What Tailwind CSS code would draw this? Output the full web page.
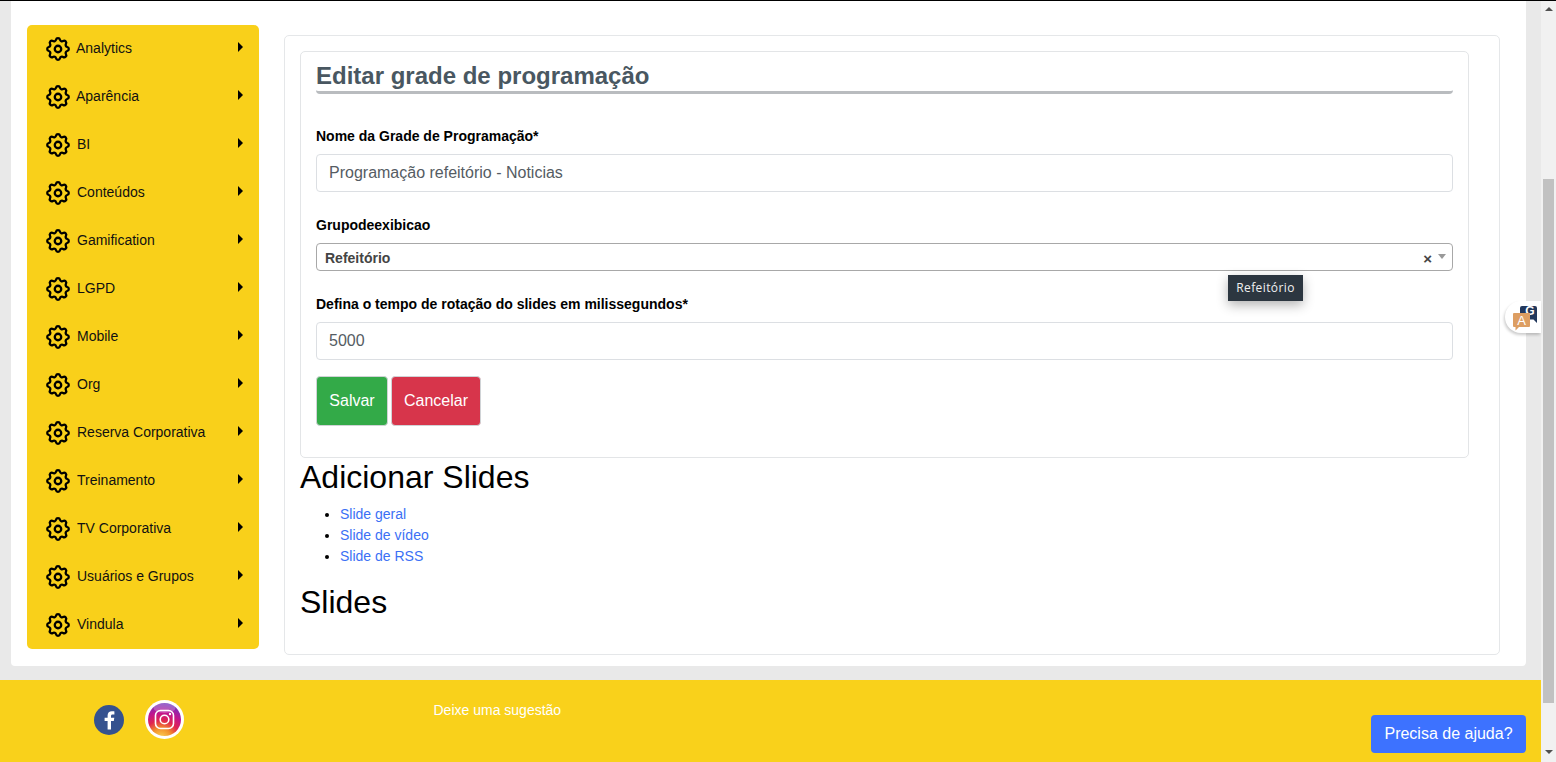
<!DOCTYPE html>
<html lang="pt-BR">
<head>
<meta charset="utf-8">
<title>Editar grade de programação</title>
<script src="https://cdn.jsdelivr.net/npm/@tailwindcss/browser@4"></script>
</head>
<body class="overflow-hidden font-['Liberation_Sans',sans-serif]">
<svg class="hidden">
  <symbol id="cog" viewBox="2 2 20 20" fill="none" stroke="currentColor" stroke-width="1.9" stroke-linecap="round" stroke-linejoin="round">
    <path d="M10.325 4.317c.426-1.756 2.924-1.756 3.35 0a1.724 1.724 0 002.573 1.066c1.543-.94 3.31.826 2.37 2.37a1.724 1.724 0 001.065 2.572c1.756.426 1.756 2.924 0 3.35a1.724 1.724 0 00-1.066 2.573c.94 1.543-.826 3.31-2.37 2.37a1.724 1.724 0 00-2.572 1.065c-.426 1.756-2.924 1.756-3.35 0a1.724 1.724 0 00-2.573-1.066c-1.543.94-3.31-.826-2.37-2.37a1.724 1.724 0 00-1.065-2.572c-1.756-.426-1.756-2.924 0-3.35a1.724 1.724 0 001.066-2.573c-.94-1.543.826-3.31 2.37-2.37.996.608 2.296.07 2.572-1.065z"/>
    <circle cx="12" cy="12" r="2.700"/>
  </symbol>
  <symbol id="caret" viewBox="0 0 5 10"><path d="M0 0l5 5-5 5z" fill="currentColor"/></symbol>
</svg>

<div class="relative h-[762px] w-[1556px] overflow-hidden border-t border-black flex">
  <!-- conteudo -->
  <div class="w-[1541px] bg-[#e9e9e9] flex flex-col">
    <div class="ml-[11px] w-[1515px] h-[665px] bg-white rounded-b-[4px] flex pl-[16px] pt-[24px]">

      <!-- menu lateral -->
      <nav class="w-[232px] h-[624px] bg-[#f9d01a] rounded-[5px] text-[14px] text-[#111]">
        <a class="h-[48px] flex items-center pb-[2px] pl-[19px] pr-[16px]"><svg class="w-[24px] h-[24px] mt-[2px] text-black"><use href="#cog"/></svg><span class="ml-[6px]">Analytics</span><svg class="ml-auto w-[5px] h-[10px] mb-[2px] text-black"><use href="#caret"/></svg></a>
        <a class="h-[48px] flex items-center pb-[2px] pl-[19px] pr-[16px]"><svg class="w-[24px] h-[24px] mt-[2px] text-black"><use href="#cog"/></svg><span class="ml-[6px]">Aparência</span><svg class="ml-auto w-[5px] h-[10px] mb-[2px] text-black"><use href="#caret"/></svg></a>
        <a class="h-[48px] flex items-center pb-[2px] pl-[19px] pr-[16px]"><svg class="w-[24px] h-[24px] mt-[2px] text-black"><use href="#cog"/></svg><span class="ml-[7px]">BI</span><svg class="ml-auto w-[5px] h-[10px] mb-[2px] text-black"><use href="#caret"/></svg></a>
        <a class="h-[48px] flex items-center pb-[2px] pl-[19px] pr-[16px]"><svg class="w-[24px] h-[24px] mt-[2px] text-black"><use href="#cog"/></svg><span class="ml-[7px]">Conteúdos</span><svg class="ml-auto w-[5px] h-[10px] mb-[2px] text-black"><use href="#caret"/></svg></a>
        <a class="h-[48px] flex items-center pb-[2px] pl-[19px] pr-[16px]"><svg class="w-[24px] h-[24px] mt-[2px] text-black"><use href="#cog"/></svg><span class="ml-[7px]">Gamification</span><svg class="ml-auto w-[5px] h-[10px] mb-[2px] text-black"><use href="#caret"/></svg></a>
        <a class="h-[48px] flex items-center pb-[2px] pl-[19px] pr-[16px]"><svg class="w-[24px] h-[24px] mt-[2px] text-black"><use href="#cog"/></svg><span class="ml-[7px]">LGPD</span><svg class="ml-auto w-[5px] h-[10px] mb-[2px] text-black"><use href="#caret"/></svg></a>
        <a class="h-[48px] flex items-center pb-[2px] pl-[19px] pr-[16px]"><svg class="w-[24px] h-[24px] mt-[2px] text-black"><use href="#cog"/></svg><span class="ml-[7px]">Mobile</span><svg class="ml-auto w-[5px] h-[10px] mb-[2px] text-black"><use href="#caret"/></svg></a>
        <a class="h-[48px] flex items-center pb-[2px] pl-[19px] pr-[16px]"><svg class="w-[24px] h-[24px] mt-[2px] text-black"><use href="#cog"/></svg><span class="ml-[7px]">Org</span><svg class="ml-auto w-[5px] h-[10px] mb-[2px] text-black"><use href="#caret"/></svg></a>
        <a class="h-[48px] flex items-center pb-[2px] pl-[19px] pr-[16px]"><svg class="w-[24px] h-[24px] mt-[2px] text-black"><use href="#cog"/></svg><span class="ml-[7px]">Reserva Corporativa</span><svg class="ml-auto w-[5px] h-[10px] mb-[2px] text-black"><use href="#caret"/></svg></a>
        <a class="h-[48px] flex items-center pb-[2px] pl-[19px] pr-[16px]"><svg class="w-[24px] h-[24px] mt-[2px] text-black"><use href="#cog"/></svg><span class="ml-[7px]">Treinamento</span><svg class="ml-auto w-[5px] h-[10px] mb-[2px] text-black"><use href="#caret"/></svg></a>
        <a class="h-[48px] flex items-center pb-[2px] pl-[19px] pr-[16px]"><svg class="w-[24px] h-[24px] mt-[2px] text-black"><use href="#cog"/></svg><span class="ml-[7px]">TV Corporativa</span><svg class="ml-auto w-[5px] h-[10px] mb-[2px] text-black"><use href="#caret"/></svg></a>
        <a class="h-[48px] flex items-center pb-[2px] pl-[19px] pr-[16px]"><svg class="w-[24px] h-[24px] mt-[2px] text-black"><use href="#cog"/></svg><span class="ml-[7px]">Usuários e Grupos</span><svg class="ml-auto w-[5px] h-[10px] mb-[2px] text-black"><use href="#caret"/></svg></a>
        <a class="h-[48px] flex items-center pb-[2px] pl-[19px] pr-[16px]"><svg class="w-[24px] h-[24px] mt-[2px] text-black"><use href="#cog"/></svg><span class="ml-[7px]">Vindula</span><svg class="ml-auto w-[5px] h-[10px] mb-[2px] text-black"><use href="#caret"/></svg></a>
      </nav>

      <!-- card externo -->
      <main class="ml-[25px] mt-[10px] w-[1216px] h-[620px] border border-[#e5e7e9] rounded-[5px] p-[15px] text-black">
        <div class="w-[1169px] h-[407px] border border-[#e3e5e7] rounded-[5px] px-[15px]">
          <h1 class="h-[42px] pt-[9px] border-b-[3px] border-[#b9bcbf] rounded-b-[4px] text-[24px] leading-[30px] font-bold text-[#495761]">Editar grade de programação</h1>

          <form>
            <label class="block mt-[32px] mb-[7px] text-[14px] leading-[21px] font-bold">Nome da Grade de Programação*</label>
            <input type="text" value="Programação refeitório - Noticias" class="block w-full h-[38px] px-[12px] border border-[#dcdfe3] rounded-[4px] text-[16px] text-[#555c63]">

            <label class="block mt-[23px] mb-[7px] text-[14px] leading-[21px] font-bold">Grupodeexibicao</label>
            <div class="flex items-center h-[28px] pl-[8px] pr-[6px] pt-[2px] border border-[#a8a8a8] rounded-[4px] text-[14px] font-bold text-[#444]">
              <span>Refeitório</span>
              <span class="ml-auto text-[15px] leading-none font-bold text-[#444]">×</span>
              <span class="ml-[6px] mb-[3px] w-0 h-0 border-x-[4px] border-x-transparent border-t-[5px] border-t-[#999]"></span>
            </div>

            <label class="block mt-[23px] mb-[7px] text-[14px] leading-[21px] font-bold">Defina o tempo de rotação do slides em milissegundos*</label>
            <input type="text" value="5000" class="block w-full h-[38px] px-[12px] border border-[#dcdfe3] rounded-[4px] text-[16px] text-[#555c63]">

            <div class="flex gap-[3px] mt-[16px]">
              <button type="button" class="w-[72px] h-[50px] bg-[#33aa48] border border-[#d0d3d6] rounded-[4px] text-[16px] text-white">Salvar</button>
              <button type="button" class="w-[90px] h-[50px] bg-[#d7354b] border border-[#d0d3d6] rounded-[4px] text-[16px] text-white">Cancelar</button>
            </div>
          </form>
        </div>

        <h2 class="text-[32px] leading-[38px] font-normal">Adicionar Slides</h2>
        <ul class="mt-[8px] pl-[40px] list-disc text-[14px] leading-[21px]">
          <li><a href="#" class="text-[#3b70f5]">Slide geral</a></li>
          <li><a href="#" class="text-[#3b70f5]">Slide de vídeo</a></li>
          <li><a href="#" class="text-[#3b70f5]">Slide de RSS</a></li>
        </ul>
        <h2 class="mt-[16px] text-[32px] leading-[38px] font-normal">Slides</h2>
      </main>
    </div>

    <!-- rodape -->
    <footer class="relative mt-[14px] h-[82px] bg-[#f9d11b]">
      <div class="absolute left-[94px] top-[25px] w-[30px] h-[30px] rounded-full bg-[#35528f] overflow-hidden">
        <svg viewBox="0 0 30 30" class="w-full h-full"><path d="M17 24.500v-8.500h2.800l.5-3.300H17V11c0-1 .4-1.600 1.700-1.600h1.700V6.400c-.4 0-1.400-.1-2.500-.1-2.600 0-4.300 1.500-4.300 4.300v2.100h-3v3.300h3v8.500z" fill="#fff"/></svg>
      </div>
      <div class="absolute left-[145px] top-[20px] w-[39px] h-[39px] rounded-full bg-white p-[3px]">
        <svg viewBox="0 0 33 33" class="w-full h-full">
          <defs>
            <radialGradient id="ig" cx="40%" cy="108%" r="110%"><stop offset="0" stop-color="#fbd85a"/><stop offset=".28" stop-color="#f3922c"/><stop offset=".5" stop-color="#e0264f"/><stop offset=".72" stop-color="#c0148f"/><stop offset="1" stop-color="#6a35c0"/></radialGradient>
          </defs>
          <circle cx="16.500" cy="16.500" r="16.500" fill="url(#ig)"/>
          <ellipse cx="16.500" cy="5" rx="11" ry="5" fill="#fff" opacity=".25"/>
          <rect x="7.500" y="7.500" width="18" height="18" rx="5" fill="none" stroke="#fff" stroke-width="1.600"/>
          <circle cx="16.500" cy="16.500" r="4.300" fill="none" stroke="#fff" stroke-width="1.600"/>
          <circle cx="22" cy="11" r="1.200" fill="#fff"/>
        </svg>
      </div>
      <a class="absolute left-[433.5px] top-[22px] text-[14px] leading-[16px] text-white">Deixe uma sugestão</a>
      <button type="button" class="absolute left-[1371px] top-[35px] w-[155px] h-[38px] bg-[#3d72ff] rounded-[4px] text-[16px] text-white">Precisa de ajuda?</button>
    </footer>
  </div>

  <!-- barra de rolagem -->
  <div class="w-[15px] bg-[#f1f1f1] flex flex-col items-center">
    <span class="mt-[6px] w-0 h-0 border-x-[4px] border-x-transparent border-b-[4px] border-b-[#505050]"></span>
    <div class="mt-[168px] w-[11px] h-[524px] bg-[#c1c1c1]"></div>
    <span class="mt-[47px] w-0 h-0 border-x-[4px] border-x-transparent border-t-[4px] border-t-[#505050]"></span>
  </div>

  <!-- tooltip do select -->
  <div class="absolute left-[1228px] top-[274px] w-[75px] h-[26px] bg-[#2c3640] text-[12px] leading-[26px] text-center text-[#f0f0f0] tracking-[0.4px] font-['Open_Sans',sans-serif] shadow-[0_4px_12px_rgba(0,0,0,0.3)]">Refeitório</div>

  <!-- widget de idioma -->
  <div class="absolute left-[1505px] top-[300px] w-[36px] h-[32px] bg-white rounded-l-full shadow-[-1px_2px_3px_rgba(0,0,0,0.2)]">
    <svg viewBox="0 0 36 32" class="w-full h-full">
      <path d="M17 5h13a2 2 0 012 2v11l0 4-3.500-3.500H17a2 2 0 01-2-2V7a2 2 0 012-2z" fill="#22385c"/>
      <text x="25" y="14" font-size="12" font-weight="700" fill="#fff" text-anchor="middle" font-family="Liberation Sans">G</text>
      <path d="M9 12h15a1 1 0 011 1v12a1 1 0 01-1 1H14l-3.500 3.500V26H9a1 1 0 01-1-1V13a1 1 0 011-1z" fill="#dd9e62"/>
      <text x="16.500" y="24" font-size="13" fill="#fff" text-anchor="middle" font-family="Liberation Sans">A</text>
    </svg>
  </div>
</div>
</body>
</html>
